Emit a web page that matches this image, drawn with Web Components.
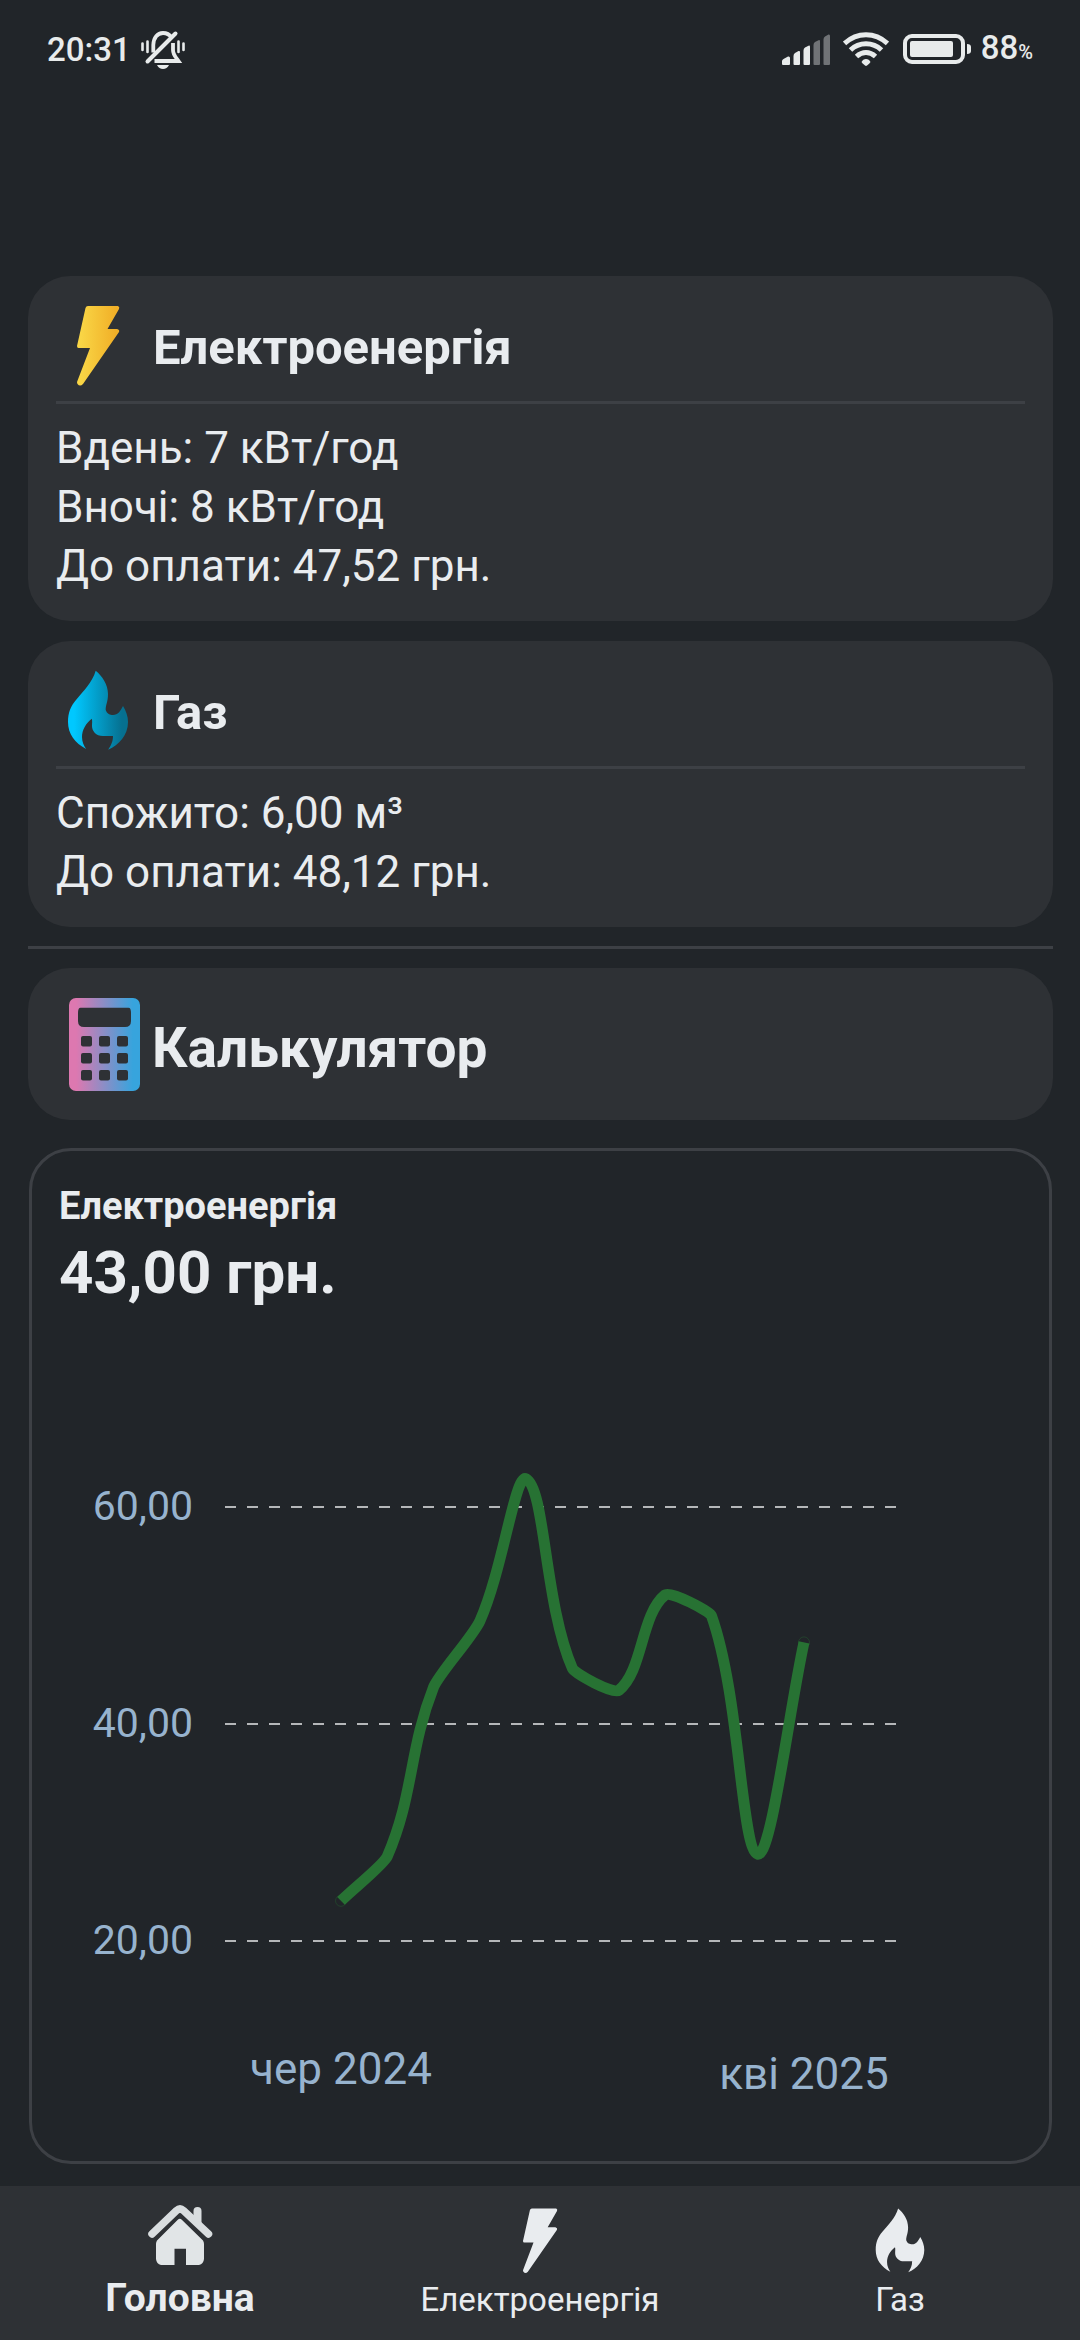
<!DOCTYPE html>
<html lang="uk">
<head>
<meta charset="utf-8">
<meta name="viewport" content="width=device-width, initial-scale=1">
<title>Головна</title>
<style>
  :root {
    --bg: #212529;
    --surface: #2e3135;
    --line: #3d4045;
    --text: #e9ecef;
    --axis: #97b3ce;
    --series: #277233;
  }
  body {
    margin: 0;
    background: var(--bg);
    color: var(--text);
    font-family: Roboto, "Noto Sans", sans-serif;
  }
</style>
</head>
<body>
<home-screen></home-screen>

<script>
const define = (name, html, setup) => {
  const template = document.createElement('template');
  template.innerHTML = html;
  customElements.define(name, class extends HTMLElement {
    constructor() {
      super();
      this.attachShadow({ mode: 'open' }).append(template.content.cloneNode(true));
    }
    connectedCallback() {
      if (setup) setup(this, this.shadowRoot);
    }
  });
};

const BOLT = 'M32 2H62Q64 3 63 5L51.500 25H61Q64 26 63 28L27 80Q24 83 21.500 80Q21 79 21 78L34 44H22.500Q21 44 21 42L29.500 4Q30 2 32 2Z';
const FLAME = 'M39.700 1.700C46 7 52 15 52 25C52 33 49.500 36 49.700 41C51 45 54 46 57 46C62 46 64.500 42 67 37C70 42 72 47 72 53C72 66 63 76 52.200 80.700C55 76 57 73 57 67H47C40 67 36 62 36 57C36 54 36.500 52 35.800 49.700C30 54 26 61 26 68C26 73 28 77 30.100 80C19 74 12 65 12 53C12 43 15 37 20 31C28 21 36 14 39.700 1.700Z';

const calculatorKeys = [25, 43, 61].map(x => [40, 57, 74].map(y =>
  `<rect x="${x}" y="${y}" width="11" height="10.500" rx="2" fill="#2e3135"/>`).join('')).join('');

const ICONS = {
  bolt: { box: 84, stops: ['#f9d545', '#f1b028'], body: fill => `<path fill="${fill}" d="${BOLT}"/>` },
  flame: { box: 84, stops: ['#00c8ff', '#067090'], body: fill => `<path fill="${fill}" d="${FLAME}"/>` },
  calculator: { box: 96, stops: ['#dd78b0', '#37a4dd'], body: fill =>
    `<rect x="13" y="2" width="71" height="93" rx="7" fill="${fill}"/>
     <path fill="#2e3135" d="M24.500 11.700H72.500Q75 11.700 75 17V25Q75 31 69 31H28Q22 31 22 25V17Q22 11.700 24.500 11.700Z"/>${calculatorKeys}` },
  house: { box: 68, body: () =>
    `<g fill="#d9dddf"><path fill="none" stroke="#d9dddf" stroke-width="7.500" stroke-linecap="round" d="M6 31L30.500 7.500Q34 4.500 37.500 7.500L62.500 31"/>
     <path d="M47.500 18V8a4 4 0 0 1 8 0V26Z"/></g>
     <path fill="#e1e5e7" d="M31.800 16.700Q33.800 14.700 35.800 16.700L57 37.500Q58 39 58 41V56Q57.500 61 53 62H40V45.700H28.500V62H15Q10.500 61 10 56V41Q10 39 11 37.500Z"/>` },
};

define('app-icon', `
  <style>
    :host { display: block; flex: none; width: var(--icon-size, 84px); height: var(--icon-size, 84px); }
    svg { display: block; width: 100%; height: 100%; }
  </style>
  <svg aria-hidden="true"></svg>`,
  (host, root) => {
    const icon = ICONS[host.getAttribute('name')];
    const colored = host.hasAttribute('colored');
    const svg = root.querySelector('svg');
    svg.setAttribute('viewBox', `0 0 ${icon.box} ${icon.box}`);
    svg.innerHTML = (colored
      ? `<linearGradient id="g"><stop offset="0.1" stop-color="${icon.stops[0]}"/><stop offset="0.9" stop-color="${icon.stops[1]}"/></linearGradient>` : '')
      + icon.body(colored ? 'url(#g)' : '#e9ecef');
  });

define('status-bar', `
  <style>
    :host {
      display: flex; align-items: center; height: 100px; padding: 0 47px;
      font-size: 33px; font-weight: 500; line-height: 40px; color: #e8ebeb;
    }
    .right { display: flex; align-items: center; margin-left: auto; }
    svg { display: block; height: 40px; fill: #e8ebeb; }
    .bell { margin-left: 10px; }
    .wifi { margin: 0 14px 0 12px; }
    .battery { margin-right: 9px; }
    small { font-size: 20px; }
  </style>
  <time>20:31</time>
  <svg class="bell" width="46" viewBox="0 -1 46 40" aria-label="Без звуку">
    <g fill="none" stroke="#e8ebeb" stroke-linecap="round">
      <path stroke-width="4" d="M6.500 30.500L34.500 2.500"/>
      <path stroke-width="3.800" stroke-linecap="butt" d="M12.300 21.500V14C12.500 6.500 16.500 2 22 2C26 2 28.500 3.500 30.500 6.500M32 12V19C32 24 35 26.500 37.500 30H13.500"/>
      <path stroke-width="2.600" d="M1.500 12.500V19M6.500 10.500V21M37.500 10.500V21M42.500 12.500V19"/>
    </g>
    <path d="M16 34H28Q26 38 22 38T16 34Z"/>
  </svg>
  <div class="right">
    <svg width="49" viewBox="0 30 49 40" aria-label="Сигнал">
      <path d="M0 61Q0 60 1.500 59L6 56.500Q8 56 8 58V64Q8 65 7 65H1Q0 65 0 64ZM11.500 56Q11.500 54 13 53L16.500 51Q18 50.500 18 52V64Q18 65 17 65H12.500Q11.500 65 11.500 64ZM21.500 50.500Q21.500 48.500 23 47.500L26.500 45.700Q28 45 28 47V64Q28 65 27 65H22.500Q21.500 65 21.500 64Z"/>
      <path fill="#707376" d="M31.500 45Q31.500 43 33 42L36.500 40.200Q38 39.500 38 41.500V64Q38 65 37 65H32.500Q31.500 65 31.500 64ZM41.500 39.500Q41.500 37.500 43 36.500L46.500 34.500Q48 34 48 36V64Q48 65 47 65H42.500Q41.500 65 41.500 64Z"/>
    </svg>
    <svg class="wifi" width="46" viewBox="0 30 46 40" aria-label="Wi-Fi">
      <g fill="none" stroke="#e8ebeb" stroke-width="5">
        <path d="M1.500 43.500Q11 34.800 23 34.800T44.500 43.500M7.500 50Q14 43.800 23 43.800T38.500 50M13.500 56.500Q18 52.500 23 52.500T32.500 56.500"/>
      </g>
      <path d="M18.500 62Q20 59 23 59T27.500 62Q27 63 24 65.500Q23 66.300 22 65.500Q19 63 18.500 62Z"/>
    </svg>
    <svg class="battery" width="69" viewBox="0 30 69 40" aria-label="Батарея">
      <rect x="2" y="36" width="58" height="26" rx="7" fill="none" stroke="#e8ebeb" stroke-width="4"/>
      <rect x="7" y="41" width="43" height="16" rx="2"/>
      <path d="M64 44Q68 44 68 47V51Q68 54 64 54Z"/>
    </svg>
    <span>88<small>%</small></span>
  </div>`);

define('meter-card', `
  <style>
    :host { display: block; padding: 28px 28px 25px; border-radius: 42px; background: var(--surface); }
    header {
      display: flex; align-items: flex-end; gap: 13px;
      margin-bottom: 15px; padding-bottom: 13px; border-bottom: 3px solid var(--line);
    }
    h2 { margin: 0; font-size: 49px; line-height: 80px; font-weight: 700; }
    .rows { font-size: 44px; line-height: 59px; }
    ::slotted(p) { margin: 0; }
  </style>
  <header><slot name="icon"></slot><h2><slot name="title"></slot></h2></header>
  <div class="rows"><slot></slot></div>`);

define('action-card', `
  <style>
    :host { display: block; --icon-size: 96px; }
    button {
      display: flex; align-items: flex-end; width: 100%; padding: 28px; border: 0; border-radius: 42px;
      background: var(--surface); color: inherit; font: 700 55px/88px Roboto, "Noto Sans", sans-serif; text-align: left;
    }
  </style>
  <button type="button"><slot name="icon"></slot><slot></slot></button>`);

define('spline-chart', `
  <style>
    :host { display: block; }
    svg { display: block; width: 100%; }
    text { fill: var(--axis); }
    .value { font-size: 41px; text-anchor: end; }
    .month { font-size: 44px; text-anchor: middle; }
    .grid { stroke: #b5b7b9; stroke-width: 2; stroke-dasharray: 11 11; }
    .series { fill: none; stroke: var(--series); stroke-width: 11; }
    .marker { fill: var(--bg); stroke: var(--series); stroke-opacity: .35; }
  </style>
  <svg viewBox="0 0 1017 844" role="img" aria-label="Графік витрат"></svg>`,
  (host, root) => {
    const values = host.getAttribute('values').split(' ').map(Number);
    const left = 309, right = 772;
    const toX = i => left + (right - left) * i / (values.length - 1);
    const toY = v => 190 + (60 - v) * 10.85;
    const p = values.map((v, i) => [toX(i), toY(v)]);
    const smooth = 0.65;
    const mid = (a, b) => [(a[0] + b[0]) / 2, (a[1] + b[1]) / 2];
    const span = (a, b) => (a[0] - b[0]) ** 2 + (a[1] - b[1]) ** 2;

    // Handles are weighted by the squared length of the neighbouring spans,
    // so a short span beside a long one stays nearly straight.
    let d = `M${p[0]}`;
    for (let i = 0; i < p.length - 1; i++) {
      const p0 = p[Math.max(i - 1, 0)], p1 = p[i], p2 = p[i + 1], p3 = p[Math.min(i + 2, p.length - 1)];
      const a = mid(p0, p1), b = mid(p1, p2), c = mid(p2, p3);
      const l1 = span(p0, p1), l2 = span(p1, p2), l3 = span(p2, p3);
      const out = l2 / (l1 + l2), into = l2 / (l2 + l3);
      const c1 = [0, 1].map(n => p1[n] + (b[n] - a[n]) * out * smooth);
      const c2 = [0, 1].map(n => p2[n] - (c[n] - b[n]) * into * smooth);
      d += `C${c1} ${c2} ${p2}`;
    }

    const ticks = [60, 40, 20].map(v => `
      <text class="value" x="161" y="${Math.round(toY(v)) + 13}">${v},00</text>
      <line class="grid" x1="193" x2="865" y1="${Math.round(toY(v))}" y2="${Math.round(toY(v))}"/>`).join('');
    const ends = [p[0], p[p.length - 1]].map(q => `<circle class="marker" cx="${q[0]}" cy="${q[1]}" r="5.500"/>`).join('');
    root.querySelector('svg').innerHTML = `${ticks}${ends}<path class="series" d="${d}"/>
      <text class="month" x="${left}" y="767">${host.getAttribute('from')}</text>
      <text class="month" x="${right}" y="772">${host.getAttribute('to')}</text>`;
  });

define('chart-card', `
  <style>
    :host { display: block; margin: 9px 1px 0; border: 3px solid var(--line); border-radius: 42px; }
    h3, p { margin: 0; padding: 0 27px; font-weight: 700; }
    h3 { padding-top: 32px; font-size: 38px; line-height: 46px; }
    p { font-size: 60px; line-height: 88px; }
  </style>
  <h3><slot name="title"></slot></h3>
  <p><slot name="amount"></slot></p>
  <slot></slot>`);

define('nav-tab', `
  <style>
    :host { display: block; flex: 1; --icon-size: 68px; }
    a {
      display: flex; flex-direction: column; align-items: center; justify-content: flex-end; gap: 5px;
      height: 154px; box-sizing: border-box; padding-bottom: 20px;
      color: inherit; text-decoration: none; font-size: 33px; line-height: 40px;
    }
    :host([active]) a { font-size: 39px; line-height: 44px; font-weight: 700; }
  </style>
  <a href="#"><slot name="icon"></slot><span><slot></slot></span></a>`,
  (host, root) => {
    if (host.hasAttribute('active')) root.querySelector('a').setAttribute('aria-current', 'page');
  });

define('home-screen', `
  <style>
    :host { display: flex; flex-direction: column; min-height: 100vh; }
    main { flex: 1; display: flex; flex-direction: column; gap: 19px; padding: 176px 27px 22px 28px; }
    .meters { display: flex; flex-direction: column; gap: 20px; }
    hr { width: 100%; height: 3px; margin: 0; border: 0; background: var(--line); }
    nav { display: flex; background: var(--surface); }
  </style>
  <status-bar></status-bar>
  <main>
    <section class="meters">
      <meter-card>
        <app-icon slot="icon" name="bolt" colored></app-icon>
        <span slot="title">Електроенергія</span>
        <p>Вдень: 7 кВт/год</p>
        <p>Вночі: 8 кВт/год</p>
        <p>До оплати: 47,52 грн.</p>
      </meter-card>
      <meter-card>
        <app-icon slot="icon" name="flame" colored></app-icon>
        <span slot="title">Газ</span>
        <p>Спожито: 6,00 м³</p>
        <p>До оплати: 48,12 грн.</p>
      </meter-card>
    </section>
    <hr>
    <action-card><app-icon slot="icon" name="calculator" colored></app-icon>Калькулятор</action-card>
    <chart-card>
      <span slot="title">Електроенергія</span>
      <span slot="amount">43,00 грн.</span>
      <spline-chart values="23.7 27.8 43.4 49.5 62.6 45.1 43.1 51.9 50 28 47.52" from="чер 2024" to="кві 2025"></spline-chart>
    </chart-card>
  </main>
  <nav>
    <nav-tab active><app-icon slot="icon" name="house"></app-icon>Головна</nav-tab>
    <nav-tab><app-icon slot="icon" name="bolt"></app-icon>Електроенергія</nav-tab>
    <nav-tab><app-icon slot="icon" name="flame"></app-icon>Газ</nav-tab>
  </nav>`);
</script>
</body>
</html>
